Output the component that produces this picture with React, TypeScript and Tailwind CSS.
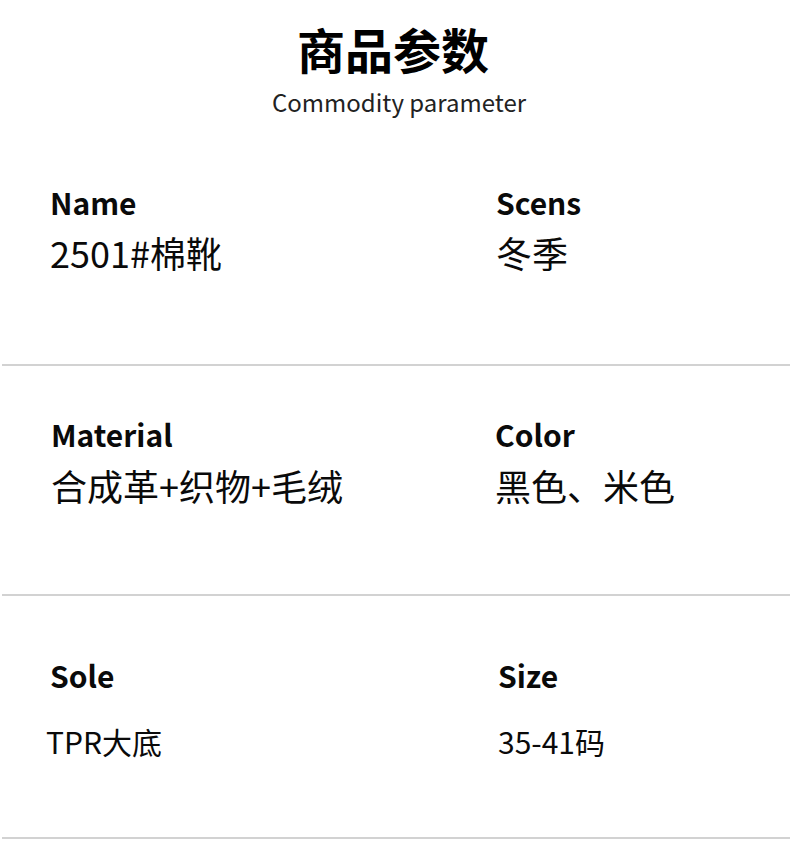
const rows = [
  {
    pad: "pt-[65px] pb-[90px]",
    valueGap: "mt-[9px]",
    valueSize: "text-[36px] leading-[44px]",
    items: [
      { label: "Name", value: "2501#棉靴", indent: "pl-[50px]", shift: "" },
      { label: "Scens", value: "冬季", indent: "pl-[1px]", shift: "" },
    ],
  },
  {
    pad: "pt-[49px] pb-[87px]",
    valueGap: "mt-[10px]",
    valueSize: "text-[36px] leading-[44px]",
    items: [
      { label: "Material", value: "合成革+织物+毛绒", indent: "pl-[51px]", shift: "" },
      { label: "Color", value: "黑色、米色", indent: "pl-[0px]", shift: "" },
    ],
  },
  {
    pad: "pt-[60px] pb-[77px]",
    valueGap: "mt-[28px]",
    valueSize: "text-[30px] leading-[38px]",
    items: [
      { label: "Sole", value: "TPR大底", indent: "pl-[50px]", shift: "-ml-[4px]" },
      { label: "Size", value: "35-41码", indent: "pl-[3px]", shift: "" },
    ],
  },
];

function App() {
  return (
    <div
      className="w-[790px] min-h-screen bg-white text-[#0a0a0a]"
      style={{ fontFamily: '"Noto Sans CJK SC", "Noto Sans", sans-serif' }}
    >
      <div className="pt-[20px] flex flex-col items-center">
        <h1 className="text-[48px] leading-[56px] font-bold text-black ml-[-4px]">商品参数</h1>
        <p className="mt-[10px] text-[24px] leading-[32px] text-[#222] ml-[8px]">Commodity parameter</p>
      </div>

      {rows.map((row, i) => (
        <div key={i}>
          <div className={`grid grid-cols-[495px_1fr] ${row.pad}`}>
            {row.items.map((item) => (
              <div key={item.label} className={item.indent}>
                <div className="text-[30px] leading-[38px] font-bold">{item.label}</div>
                <div className={`${row.valueGap} ${row.valueSize} ${item.shift}`}>{item.value}</div>
              </div>
            ))}
          </div>
          <div className="ml-[2px] h-[2px] bg-[#d2d2d2]" />
        </div>
      ))}
    </div>
  );
}

export default App;
